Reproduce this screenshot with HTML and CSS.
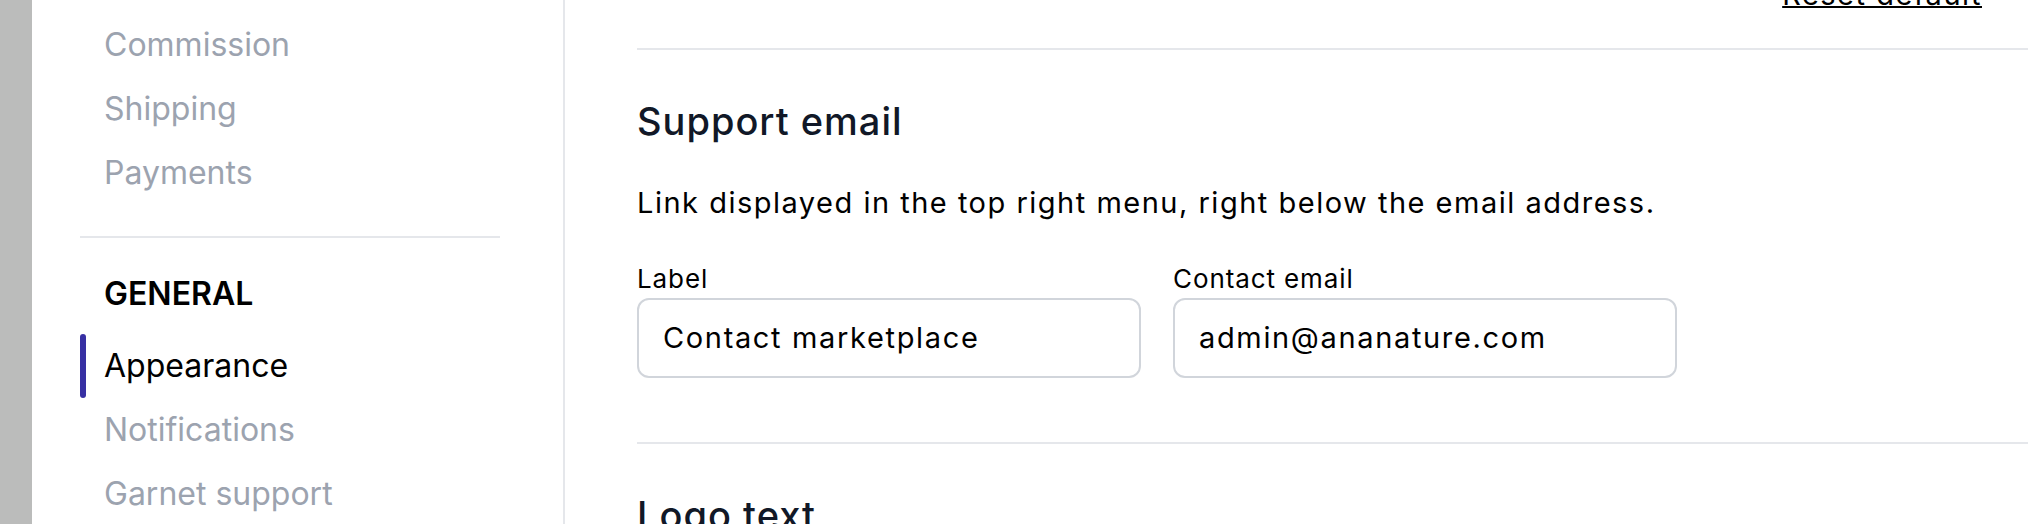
FILE: index.html
```html
<!DOCTYPE html>
<html lang="en">
<head>
  <meta charset="UTF-8">
  <title>Appearance settings</title>
  <link rel="stylesheet" href="styles.css">
</head>
<body>
  <div class="backdrop"></div>
  <nav class="sidebar">
    <ul class="menu first">
      <li><a href="#">Commission</a></li>
      <li><a href="#">Shipping</a></li>
      <li><a href="#">Payments</a></li>
    </ul>
    <hr class="menu-divider">
    <h2 class="menu-title">GENERAL</h2>
    <ul class="menu">
      <li class="active"><a href="#">Appearance</a></li>
      <li><a href="#">Notifications</a></li>
      <li><a href="#">Garnet support</a></li>
    </ul>
  </nav>
  <main class="main">
    <section class="section top">
      <div class="reset-row"><a href="#" class="reset">Reset default</a></div>
    </section>
    <section class="section">
      <h3>Support email</h3>
      <p class="desc">Link displayed in the top right menu, right below the email address.</p>
      <div class="fields">
        <div class="field">
          <label for="supportLabel">Label</label>
          <input type="text" id="supportLabel" value="Contact marketplace">
        </div>
        <div class="field">
          <label for="supportEmail">Contact email</label>
          <input type="text" id="supportEmail" value="admin@ananature.com">
        </div>
      </div>
    </section>
    <section class="section">
      <h3>Logo text</h3>
    </section>
  </main>
</body>
</html>
```

FILE: styles.css
```css
body {
  margin: 0;
  padding: 0;
  font-family: Inter, "Noto Sans", sans-serif;
  background: #fff;
  color: #000;
  display: flex;
  height: 100vh;
  overflow: hidden;
}
.backdrop {
  width: 32px;
  flex-shrink: 0;
  background: #bbbcbb;
}
.sidebar {
  width: 533px;
  flex-shrink: 0;
  box-sizing: border-box;
  padding: 0 63px 0 48px;
  border-right: 2px solid #e5e7eb;
}
.menu {
  list-style: none;
  margin: 0;
  padding: 0;
}
.menu.first {
  margin-top: 13px;
}
.menu li {
  position: relative;
  padding-left: 24px;
  font-size: 32px;
  line-height: 64px;
}
.menu a {
  color: #9ca3af;
  text-decoration: none;
}
.menu li.active a {
  color: #000;
}
.menu li.active::before {
  content: "";
  position: absolute;
  left: 0;
  top: 0;
  width: 6px;
  height: 64px;
  border-radius: 3px;
  background: #3730a3;
}
.menu-divider {
  margin: 31px 0 0;
  border: none;
  border-top: 2px solid #e5e7eb;
}
.menu-title {
  margin: 24px 0 8px;
  padding-left: 24px;
  font-size: 32px;
  line-height: 64px;
  font-weight: 600;
  color: #000;
}
.main {
  flex: 1;
  padding-left: 72px;
}
.section {
  padding: 43px 0 64px;
  border-bottom: 2px solid #e5e7eb;
}
.section.top {
  margin-top: -25px;
  padding: 0 0 33px;
}
.reset-row {
  display: flex;
  justify-content: flex-end;
  padding-right: 46px;
}
.reset {
  color: #000;
  font-size: 29px;
  line-height: 40px;
  letter-spacing: 1.5px;
  text-decoration: underline;
  text-decoration-thickness: 2px;
}
h3 {
  margin: 0;
  font-size: 38px;
  line-height: 56px;
  font-weight: 500;
  letter-spacing: 1px;
  color: #111827;
}
.desc {
  margin: 34px 0 0;
  font-size: 29px;
  line-height: 40px;
  letter-spacing: 1.5px;
}
.fields {
  display: flex;
  gap: 32px;
  margin-top: 40px;
}
.field label {
  display: block;
  font-size: 26px;
  line-height: 32px;
  letter-spacing: 0.9px;
}
.field input {
  display: block;
  box-sizing: border-box;
  width: 504px;
  margin-top: 3px;
  padding: 18px 24px;
  font-family: Inter, "Noto Sans", sans-serif;
  font-size: 29px;
  line-height: 40px;
  letter-spacing: 1.65px;
  color: #000;
  border: 2px solid #d1d5db;
  border-radius: 12px;
  outline: none;
}
```
